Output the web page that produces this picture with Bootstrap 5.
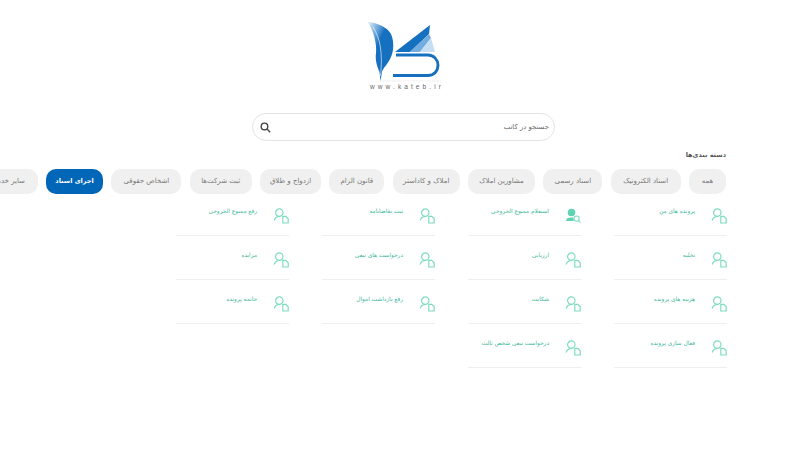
<!DOCTYPE html>
<html lang="fa" dir="rtl">
<head>
    <meta charset="UTF-8">
    <meta name="viewport" content="width=device-width, initial-scale=1.0">
    <title>کاتب</title>
    <link href="https://cdn.jsdelivr.net/npm/bootstrap@5.3.0/dist/css/bootstrap.min.css" rel="stylesheet">
    <style>
        body {
            font-family: "DejaVu Sans", sans-serif;
            background-color: #ffffff;
            overflow: hidden;
        }
        .logo-box {
            height: 109px;
            padding-top: 10px;
        }
        .search-wrap {
            padding-left: 7px;
        }
        .search-box {
            width: 303px;
            height: 28px;
            margin-top: 4px;
            padding: 0 3px 0 7px;
            border: 1px solid #e4e4e4;
            border-radius: 14px;
        }
        .search-box input {
            border: 0;
            outline: 0;
            font-size: 6.9px;
            background: transparent;
        }
        .search-box input::placeholder {
            color: #666666;
        }
        .section-title {
            margin: 10px 74px 0 0;
            font-size: 6.5px;
            font-weight: 700;
            color: #555555;
            height: 18px;
            line-height: 8px;
        }
        .chip-row {
            margin-right: 74px;
            gap: 8.33px;
        }
        .chip {
            height: 25px;
            flex: none;
            padding: 0;
            border: 0;
            border-radius: 10px;
            font-size: 7px;
            background-color: #f0f0f0;
            color: #777777;
        }
        .chip.chip-on {
            background-color: #0067b8;
            color: #ffffff;
            font-weight: 700;
            font-size: 6.5px;
        }
        .chip-w1 { width: 37px; }
        .chip-w2 { width: 70px; }
        .chip-w3 { width: 59px; }
        .chip-w4 { width: 67px; }
        .chip-w5 { width: 67px; }
        .chip-w6 { width: 55px; }
        .chip-w7 { width: 61px; }
        .chip-w8 { width: 62px; }
        .chip-w9 { width: 70px; }
        .chip-w10 { width: 57px; }
        .chip-w11 { width: 62px; }
        .item-grid {
            display: grid;
            grid-template-columns: repeat(4, 113px);
            column-gap: 33px;
            row-gap: 2px;
            margin-right: 73px;
        }
        .item-link {
            height: 42px;
            padding-top: 13.5px;
            border-bottom: 1px solid #eeeeee;
            font-size: 5.8px;
            color: #41b89a;
            text-decoration: none;
        }
        .item-link svg {
            flex: none;
            margin-left: 16px;
        }
        .item-link span {
            padding-top: .5px;
            line-height: 7px;
            white-space: nowrap;
        }
    </style>
</head>
<body>
    <svg width="0" height="0" class="d-block">
        <symbol id="userDoc" viewBox="0 0 16 16">
            <g fill="none" stroke="#7fdcc0" stroke-width="1.2">
                <circle cx="6.3" cy="4.6" r="3.7"/>
                <path d="M1.2 12.5C1.8 9.8 3.6 8.6 6.8 8.4"/>
                <path d="M9.8 8.3h3l2.4 2.5v4.2H9.8z"/>
            </g>
        </symbol>
        <symbol id="userSearch" viewBox="0 0 16 16">
            <circle cx="6.5" cy="4.5" r="3.8" fill="#5fd4b4"/>
            <path d="M1 13c0-2.4 2-3.4 5-3.4 1 0 2 .1 2.6.4v3z" fill="#5fd4b4"/>
            <g fill="none" stroke="#7fdcc0" stroke-width="1.1">
                <circle cx="11.6" cy="10.6" r="2.6"/>
                <path d="M13.5 12.6l2 2"/>
            </g>
        </symbol>
        <linearGradient id="quill" x1="0.1" y1="0" x2="0.5" y2="0.45">
            <stop offset="0" stop-color="#cfe3f4"/>
            <stop offset="0.5" stop-color="#5d9fd8"/>
            <stop offset="0.8" stop-color="#1570c0"/>
        </linearGradient>
    </svg>

    <div class="logo-box d-flex justify-content-center">
        <svg width="120" height="90" viewBox="0 0 120 90" dir="ltr">
            <path d="M28 12C38 13 47 17 51 24 54 31 54 40 51 47 48 54 43 58 42 62L40.5 71 39.5 62C37 56 35 50 36 43 37 35 34 22 28 12Z" fill="url(#quill)"/>
            <path d="M33 17C40 28 43 42 40.5 66" fill="none" stroke="#ffffff" stroke-width=".6"/>
            <path d="M55 42L90 15 89 24 70 42z" fill="#1570c0"/>
            <path d="M70 42L89 24 91 28 80 42z" fill="#72ace0"/>
            <path d="M80 42L91 28 95 42z" fill="#c6def2"/>
            <path d="M56 45H88C94 45 98 50 98 55 98 61 94 65.500 88 65.500H53" fill="none" stroke="#1570c0" stroke-width="2.8"/>
            <path d="M40 71H101" stroke="#e6e6e6" stroke-width=".6"/>
            <text x="67" y="79" text-anchor="middle" font-family="Liberation Sans, sans-serif" font-size="6.500" letter-spacing="3.100" fill="#666666">www.kateb.ir</text>
        </svg>
    </div>

    <div class="search-wrap d-flex justify-content-center">
        <div class="search-box d-flex align-items-center">
            <input class="flex-grow-1" type="text" placeholder="جستجو در کاتب">
            <svg width="11" height="11" viewBox="0 0 16 16" fill="none" stroke="#444444" stroke-width="2">
                <circle cx="6.5" cy="6.5" r="4.8"/>
                <path d="M10.2 10.2l4.6 4.6"/>
            </svg>
        </div>
    </div>

    <div class="section-title">دسته بندی‌ها</div>

    <div class="chip-row d-flex">
        <button class="btn chip chip-w1" type="button">همه</button>
        <button class="btn chip chip-w2" type="button">اسناد الکترونیک</button>
        <button class="btn chip chip-w3" type="button">اسناد رسمی</button>
        <button class="btn chip chip-w4" type="button">مشاورین املاک</button>
        <button class="btn chip chip-w5" type="button">املاک و کاداستر</button>
        <button class="btn chip chip-w6" type="button">قانون الزام</button>
        <button class="btn chip chip-w7" type="button">ازدواج و طلاق</button>
        <button class="btn chip chip-w8" type="button">ثبت شرکت‌ها</button>
        <button class="btn chip chip-w9" type="button">اشخاص حقوقی</button>
        <button class="btn chip chip-on chip-w10" type="button">اجرای اسناد</button>
        <button class="btn chip chip-w11" type="button">سایر خدمات</button>
    </div>

    <div class="item-grid" id="items"></div>

    <script src="https://cdn.jsdelivr.net/npm/bootstrap@5.3.0/dist/js/bootstrap.bundle.min.js"></script>
    <script>
        const items = [
            'پرونده های من', 'استعلام ممنوع الخروجی', 'ثبت تقاضانامه', 'رفع ممنوع الخروجی',
            'تخلیه', 'ارزیابی', 'درخواست های تبعی', 'مزایده',
            'هزینه های پرونده', 'شکایت', 'رفع بازداشت اموال', 'خاتمه پرونده',
            'فعال سازی پرونده', 'درخواست تبعی شخص ثالث'
        ];
        document.getElementById('items').innerHTML = items.map((name, i) => `
            <a href="#" class="item-link d-flex align-items-start">
                <svg width="16" height="16"><use href="#${i === 1 ? 'userSearch' : 'userDoc'}"/></svg>
                <span>${name}</span>
            </a>`).join('');
    </script>
</body>
</html>
